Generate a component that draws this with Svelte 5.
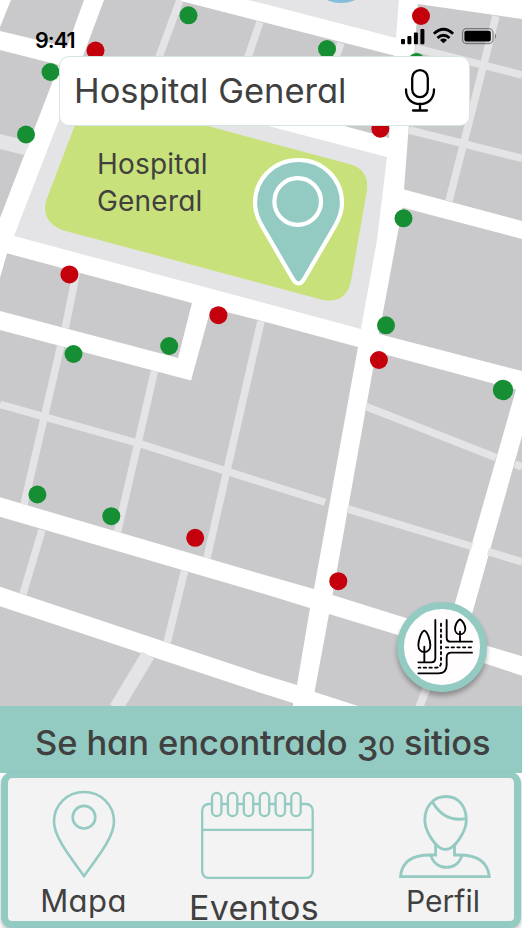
<script>
  const blocks = [
    '11,0 84,0 67,47 0,31 0,27',
    '0,50 59,65 0,218',
    '104,0 177,0 394,55.5 389,138 83,56',
    '418,4 522,19 522,221 404,189.5',
    '402.5,207.5 522,239 522,371 379,334',
    '7,253.3 192,303 178,358 0,311 0,278',
    '0,330 191,380.5 211,308 262,321 358,347 314,589 262,574.3 0,497.3',
    '376,352 516,389.5 447,631 406,618 332.5,595',
    '522,436 465,639 522,656.3',
    '0,516.7 262,593.3 310,608 297,685 261,674 0,586.7',
    '0,606.3 262,693.3 293,703 293,706 0,706',
    '329,614 398,635 483,662.7 522,675.7 522,706 358,706 314.5,692'
  ];
  const lanes = [
    [180, 0, 159, 57, 7.5], [260, 22, 248, 57, 7.5], [341, 43, 336, 57, 7.5],
    [496, 16, 449, 201, 7.5], [415, 48, 522, 75, 7.5], [409, 130, 522, 158.3, 7.5],
    [76.5, 272, 65.3, 328, 7.5], [60.7, 346, 24, 504.5, 7.5], [154.5, 371, 117.5, 532, 7.5],
    [261, 321, 207, 558, 7.5], [0, 404.3, 141, 444, 7.5], [140, 443.7, 325, 502.3, 7.5], [347.5, 508.8, 472, 546.5, 7.5],
    [488, 551.5, 522, 562, 7.5], [366, 406.5, 496, 457.5, 7.5], [515, 464, 522, 467, 7.5],
    [42, 530, 23, 594, 7.5], [184.5, 571, 167, 643, 7.5], [148, 655, 116, 708, 14], [429, 682, 419, 708, 8]
  ];
  const green = [[188.5, 15.3], [50.5, 72], [26, 134.5], [327, 49], [416.5, 62], [403.5, 218.3], [386, 325.3], [503, 390, 10.2], [169.2, 346], [73.5, 354], [37.4, 494.5], [111.3, 516.2]];
  const red = [[95.5, 50.5], [421, 16], [380.3, 128.7], [69.4, 274.4], [218.4, 315.2], [378.9, 360], [195.2, 537.8], [338.3, 581.2]];
  const rings = [16.7, 32.6, 48.5, 64.5, 80.3, 96];
</script>

<main>
  <section class="map">
    <svg class="streets" width="522" height="706" viewBox="0 0 522 706">
      <g fill="#c9c9cb">{#each blocks as b}<polygon points={b} />{/each}</g>
      <g fill="#e4e4e6">
        <polygon points="248,0 399,0 396,38 261,3" />
        <polygon points="76,76 387,157 377,240 361,329 14,236" />
        <polygon points="0,134 31,141.5 24,155 0,149" />
      </g>
      <g stroke="#e4e4e6">
        {#each lanes as [x1, y1, x2, y2, w]}<line {x1} {y1} {x2} {y2} stroke-width={w} />{/each}
      </g>
      <circle cx="341" cy="-31" r="34" fill="#85bcdc" />
      <path fill="#c8e17a" d="M93 95 L208 126 L351 164.5 Q369 170 367 190 L351 281 Q346 304 323 300 L62 230 Q41 221 46 201 L75 125Z" />
      <g fill="#168f34">{#each green as [x, y, r]}<circle cx={x} cy={y} r={r ?? 9} />{/each}</g>
      <g fill="#c4000c">{#each red as [x, y]}<circle cx={x} cy={y} r="9" />{/each}</g>
      <g fill="#93cac1" stroke="#fff" stroke-width="4.2">
        <path d="M298.5 160 C323 160 342 179 342 203 C342 211 339 219 335 226 L303.5 280 Q298.5 287 293.5 280 L262 226 C258 219 255 211 255 203 C255 179 274 160 298.5 160Z" />
        <circle cx="297.7" cy="201.5" r="23.3" />
      </g>
    </svg>

    <header>
      <span class="time">9:41</span>
      <svg width="98" height="20" viewBox="399 26 98 20">
        <rect x="401" y="39" width="4" height="5.3" rx="1" />
        <rect x="407.4" y="36" width="4" height="8.3" rx="1" />
        <rect x="413.9" y="32.4" width="4" height="11.9" rx="1" />
        <rect x="420.4" y="29" width="4" height="15.3" rx="1" />
        <g fill="none" stroke="#000" stroke-width="2.9">
          <path d="M433.9 33.7 Q443.5 24.9 453.1 33.7" />
          <path d="M437.5 38 Q443.5 32.4 449.5 38" />
        </g>
        <path d="M443.5 43.3 L440 40 Q443.5 37.2 447 40Z" />
        <rect x="462.5" y="28.7" width="30.5" height="14.8" rx="4" fill="none" stroke="#000" stroke-opacity=".4" stroke-width="1.3" />
        <rect x="464.4" y="30.7" width="26.4" height="10.8" rx="2" />
        <path d="M494.9 33.4 Q497 36 494.9 38.7Z" opacity=".45" />
      </svg>
    </header>

    <div class="search">
      <span>Hospital General</span>
      <svg width="32" height="44" viewBox="0 0 32 44" fill="none" stroke="#000" stroke-width="2.3" stroke-linecap="round">
        <rect x="8.2" y="2.1" width="15.6" height="27" rx="7.8" />
        <path d="M2 21.5 C2 31 8 36 16 36 S30 31 30 21.5 M16 36 V42.4 M9 42.5 H23" />
      </svg>
    </div>

    <p class="place"><span>Hospital</span><br /><span>General</span></p>

    <button class="routes" aria-label="Rutas">
      <svg width="105" height="105" viewBox="0 0 315 315" fill="none" stroke="#000" stroke-width="5.6" stroke-linecap="round" stroke-linejoin="round">
        <path d="M136 75 V190 Q136 202 124 202 H85 M170 75 V128 Q170 140 182 140 H246 M246 173 H184 Q170 173 170 187 V210 Q170 235 145 235 H85" />
        <path stroke-dasharray="7 10" d="M153 86 V202 Q153 218 137 218 H86 M168 157 H247" />
        <path d="M103 107 C93 110 85 137 85 151 C85 165 94 171 103 171 S121 165 121 151 C121 137 113 110 103 107Z M103 155 V201" />
        <path d="M210 73 C202 76 195 92 195 101 C195 112 202 118 210 118 S226 112 226 101 C226 92 218 76 210 73Z M210 110 V139" />
      </svg>
    </button>
  </section>

  <div class="banner"><span>Se han encontrado <b class="three">3</b><b class="zero">0</b> sitios</span></div>

  <nav>
    <a class="mapa" href="#mapa">
      <svg width="64" height="90" viewBox="0 0 64 90" fill="none" stroke="#93cac1" stroke-width="2.6">
        <path d="M32 3 C49 3 62 16 62 32.5 C62 49 44 70 32 87 C20 70 2 49 2 32.5 C2 16 15 3 32 3Z" />
        <circle cx="32" cy="28.2" r="11.3" />
      </svg>
      <span>Mapa</span>
    </a>
    <a class="eventos" href="#eventos">
      <svg width="114" height="90" viewBox="0 0 114 90" fill="#f3f3f3" stroke="#93cac1" stroke-width="2.3">
        <rect x="2.2" y="15" width="110.5" height="74" rx="6.5" />
        <path d="M2 40.8 H113" />
        {#each rings as x}<rect x={x - 4.7} y="3.9" width="9.4" height="23.2" rx="4.7" />{/each}
      </svg>
      <span>Eventos</span>
    </a>
    <a class="perfil" href="#perfil">
      <svg width="92" height="90" viewBox="0 0 92 90" fill="none" stroke="#93cac1" stroke-width="2.8">
        <path d="M47 7.5 C60 7.5 67.3 18 67.3 31 C67.3 42 56 60.5 46.5 60.5 C37 60.5 25.8 42 25.8 31 C25.8 18 34 7.5 47 7.5Z" />
        <path d="M33.5 13 C41 26 52 32 66 29.8" />
        <path d="M36.6 55 V66 H31 C12 66 2.5 74 1.5 87.7 H90.3 C89 74 79 66 60 66 H55.5 V55" />
        <path d="M31.8 66 C36 82.5 59 82.5 63 66" />
      </svg>
      <span>Perfil</span>
    </a>
  </nav>
</main>

<style>
  :global(body) { margin: 0; background: #fff; }
  main {
    width: 522px; height: 928px; overflow: hidden; display: flex; flex-direction: column;
    font-family: Inter, "Noto Sans", sans-serif; font-feature-settings: "cv11" 1; color: #404040;
  }
  svg { display: block; flex: none; }
  span { white-space: nowrap; }
  .map { position: relative; height: 706px; flex: none; }
  .streets { position: absolute; inset: 0; }
  header {
    position: relative; height: 56px; box-sizing: border-box; padding: 26px 25px 0 35px;
    display: flex; justify-content: space-between; color: #000;
  }
  .time { font-size: 21.5px; line-height: 28px; font-weight: 600; letter-spacing: -0.9px; }
  .search {
    position: relative; box-sizing: border-box; width: 411px; height: 70px; margin-left: 59px; padding: 0 33px 2px 14px;
    border: 1px solid #d5e5e2; border-radius: 10px; background: #fff;
    display: flex; align-items: center; justify-content: space-between;
    font-size: 34.5px; letter-spacing: 0;
  }
  .place { position: relative; margin: 20px 0 0 97px; font-size: 28px; line-height: 36.5px; letter-spacing: 0.2px; }
  .routes {
    position: absolute; left: 397px; top: 602px; width: 90px; height: 90px; padding: 0; box-sizing: border-box;
    display: flex; align-items: center; justify-content: center;
    border: 7.5px solid #93cac1; border-radius: 50%; background: #fffdfd; box-shadow: 0 4px 5px rgba(0, 0, 0, 0.3);
  }
  .banner {
    height: 66.5px; flex: none; background: #93cac1; display: flex; align-items: center; padding: 10px 0 0 35px; box-sizing: border-box;
    font-size: 34.5px; font-weight: 450; letter-spacing: -0.1px;
  }
  .banner b { font-weight: inherit; line-height: 1; }
  .three { vertical-align: -6px; }
  .banner .zero { font-size: 26px; font-weight: 500; }
  nav {
    position: relative; box-sizing: border-box; width: 520px; height: 156px; margin: -0.5px 0 0 1px; flex: none;
    border: 7px solid #93cac1; border-top-width: 6px; border-radius: 11px; background: #f3f3f3; box-shadow: 0 3px 4px rgba(0, 0, 0, 0.25);
    display: flex; justify-content: space-between; padding: 10.5px 23px 0 33px;
  }
  a { display: flex; flex-direction: column; align-items: center; color: inherit; text-decoration: none; }
  a span { font-size: 30px; line-height: 40px; margin-top: 2.5px; }
  .mapa { width: 86px; }
  .mapa span { font-size: 31px; letter-spacing: 0.4px; margin-left: -1px; }
  .eventos { width: 130px; margin-left: -12px; }
  .eventos span { font-size: 34px; line-height: 44px; margin-top: 7px; letter-spacing: 0.3px; margin-left: -6px; }
  .perfil { width: 92px; }
  .perfil span { margin-left: -4px; }
</style>
